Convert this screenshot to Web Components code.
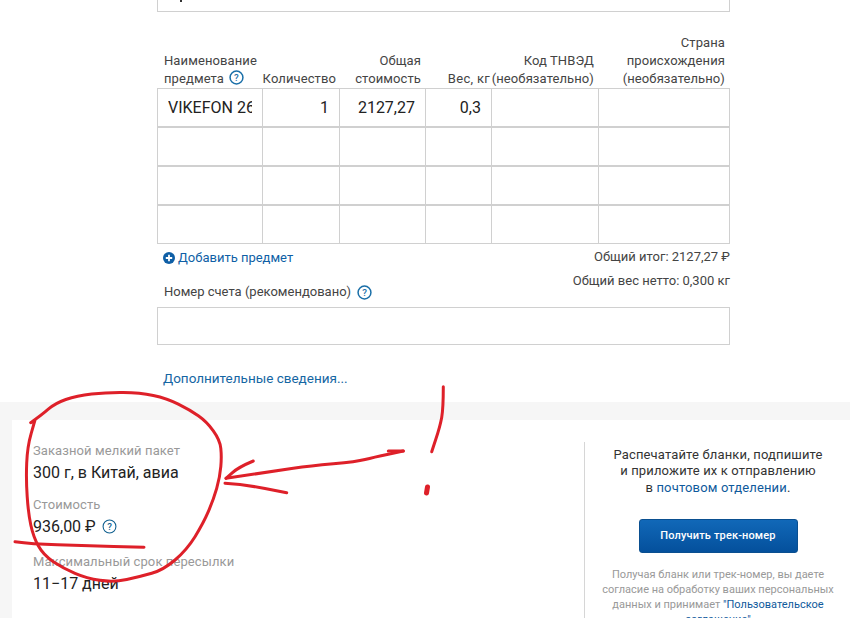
<!DOCTYPE html>
<html lang="ru"><head><meta charset="utf-8"><title>Бланки</title>
<style>
html,body{margin:0;padding:0;background:#fff}
body{width:850px;height:618px;overflow:hidden;position:relative;font-family:Roboto,"Liberation Sans",sans-serif;color:#333}
</style></head><body>
<customs-form></customs-form>
<result-panel></result-panel>
<red-marks></red-marks>
<script>
const helpSvg=(s,c,w)=>`<svg width="${s}" height="${s}" viewBox="0 0 14 14" style="vertical-align:-2px"><circle cx="7" cy="7" r="6" fill="none" stroke="${c}" stroke-width="${w}"/><text x="7" y="10.2" text-anchor="middle" font-family="Roboto,sans-serif" font-size="9" font-weight="500" fill="${c}">?</text></svg>`;
class HelpIcon extends HTMLElement{constructor(){super();const s=+this.getAttribute('size')||14;this.attachShadow({mode:'open'}).innerHTML=`<style>:host{display:inline-block;line-height:0}</style>${helpSvg(s,this.getAttribute('color')||'#1a6fa8',this.getAttribute('w')||1.3)}`}}
customElements.define('help-icon',HelpIcon);

class CustomsForm extends HTMLElement{constructor(){super();
const cols=[['VIKEFON 26','1','2127,27','0,3','',''],['','','','','',''],['','','','','',''],['','','','','','']];
const rows=cols.map((r,i)=>r.map((t,j)=>`<div class="c c${j} ${i?'top2':''}"><span>${t}</span></div>`).join('')).join('');
this.attachShadow({mode:'open'}).innerHTML=`<style>
:host{display:block;box-sizing:border-box;width:573px;margin-left:157px;height:402px;font:13px/18px Roboto,"Liberation Sans",sans-serif;color:#444}
.stub{height:11px;border:solid #d0d0d0;border-width:0 1px 1px;box-sizing:content-box;position:relative;overflow:hidden}
.stub i{display:block;width:2px;height:2px;background:#333;margin-left:22px}
.grid{display:grid;grid-template-columns:105px 77px 86px 66px 107px 132px}
.head{margin-top:22px;height:54px;align-items:end}
.head div{padding:0 4px 0 0;text-align:right;white-space:nowrap;letter-spacing:.1px}
.head div:first-child{text-align:left;padding-left:7px}
.head .q{padding-right:3px}
.head .w{padding-right:1px;letter-spacing:.3px}
.head help-icon{margin-left:2px}
.body{border:1px solid #d0d0d0;grid-template-columns:104px 77px 86px 66px 107px 131px}
.c{height:37px;border-left:1px solid #d0d0d0;display:flex;align-items:center;justify-content:flex-end;padding:0 10px;font-size:16px;color:#222;overflow:hidden;box-sizing:border-box}
.c0{border-left:0;justify-content:flex-start;padding:0 10px}
.c0 span{white-space:nowrap;overflow:hidden;width:85px;display:block}
.top2{border-top:2px solid #d0d0d0;height:39px}
.below{display:flex;justify-content:space-between;margin-top:5px;height:33px}
.add{color:#0f5fa6;display:flex;align-items:center;gap:3px;height:16px;margin:1px 0 0 6px;font-size:13px}
.tot{text-align:right;font-size:13px;line-height:16px;color:#444}
.tot div+div{margin-top:8px}
.lab{margin:0 0 0 7px;line-height:18px;height:20px;display:flex;gap:6px;align-items:center}
.inp{height:36px;border:1px solid #d0d0d0;margin-top:5px}
.more{display:block;margin:24px 0 0 6px;color:#1566a3;font-size:13.5px}
</style>
<div class="stub"><i></i></div>
<div class="grid head">
<div>Наименование<br>предмета <help-icon size="15" w="1.4"></help-icon></div><div class="q">Количество</div><div>Общая<br>стоимость</div><div class="w">Вес, кг</div><div>Код ТНВЭД<br>(необязательно)</div><div style="padding-right:5px">Страна<br>происхождения<br>(необязательно)</div>
</div>
<div class="grid body">${rows}</div>
<div class="below">
<div class="add"><svg width="12" height="12" viewBox="0 0 12 12"><circle cx="6" cy="6" r="6" fill="#0f5fa6"/><path d="M6 2.8v6.4M2.8 6h6.4" stroke="#fff" stroke-width="1.8"/></svg>Добавить предмет</div>
<div class="tot"><div>Общий итог: 2127,27 ₽</div><div>Общий вес нетто: 0,300 кг</div></div>
</div>
<div class="lab">Номер счета (рекомендовано) <help-icon size="15" w="1.4"></help-icon></div>
<div class="inp"></div>
<a class="more">Дополнительные сведения...</a>`}}
customElements.define('customs-form',CustomsForm);

class ResultPanel extends HTMLElement{constructor(){super();this.attachShadow({mode:'open'}).innerHTML=`<style>
:host{display:block;background:#f6f6f6;padding:18px 0 0 12px;height:216px;box-sizing:border-box;overflow:hidden}
.w{background:#fff;height:300px;display:flex;padding:20px 0 0 21px;box-sizing:border-box}
.l{width:551px;flex:none;font:16px/20px Roboto,"Liberation Sans",sans-serif;color:#222;padding-top:2px}
.k{font-size:13px;line-height:18px;color:#999;letter-spacing:.1px}
.v{margin-top:3px;height:33px}
.v.b{height:36px}
.v help-icon{margin-left:2px}
.r{width:267px;flex:none;border-left:1px solid #d6d6d6;margin-top:2px;text-align:center;font:13px/16.4px Roboto,"Liberation Sans",sans-serif;color:#333;padding-top:5px;box-sizing:border-box;letter-spacing:.15px}
.r a{color:#0f5a9c}
.btn{display:block;width:159px;height:34px;margin:23px auto 0;box-sizing:border-box;border:1px solid #0a4f90;border-radius:3px;background:linear-gradient(#1168b8,#04509c);color:#fff;font:500 11px/32px Roboto,"Liberation Sans",sans-serif}
.s{margin-top:14px;font-size:11px;line-height:15px;color:#999;letter-spacing:0}
</style>
<div class="w"><div class="l">
<div class="k">Заказной мелкий пакет</div><div class="v">300 г, в Китай, авиа</div>
<div class="k">Стоимость</div><div class="v b">936,00 ₽ <help-icon size="15" w="1" color="#0f5f8f"></help-icon></div>
<div class="k">Максимальный срок пересылки</div><div class="v">11−17 дней</div>
</div><div class="r">Распечатайте бланки, подпишите<br>и приложите их к отправлению<br>в <a>почтовом отделении</a>.
<div class="btn">Получить трек-номер</div>
<div class="s">Получая бланк или трек-номер, вы даете<br>согласие на обработку ваших персональных<br>данных и принимает <a>"Пользовательское<br>соглашение"</a></div>
</div></div>`}}
customElements.define('result-panel',ResultPanel);

class RedMarks extends HTMLElement{constructor(){super();
const z5=p=>p.map(([x,y])=>[x/3,y/3+380]),z7=p=>p.map(([x,y])=>[x/3+210,y/3+380]);
const f=n=>n.toFixed(1);
const d=p=>{let s=`M${f(p[0][0])} ${f(p[0][1])}`;for(let i=1;i<p.length-1;i++){const mx=(p[i][0]+p[i+1][0])/2,my=(p[i][1]+p[i+1][1])/2;s+=`Q${f(p[i][0])} ${f(p[i][1])} ${f(mx)} ${f(my)}`}const l=p[p.length-1];return s+`L${f(l[0])} ${f(l[1])}`};
const paths=[
z5([[92,128],[125,105],[165,70],[230,47],[320,37],[420,38],[500,55],[570,90],[620,125],[660,180],[665,230],[660,290],[640,360],[610,430],[560,510],[490,570],[420,590],[340,607],[260,595],[190,565],[130,525],[100,470],[85,400],[78,300],[82,200],[105,120]]),
z5([[45,485],[95,492],[250,497],[432,502]]),
z7([[48,295],[200,272],[300,258],[440,245],[490,232],[580,213]]),
z7([[535,213],[580,213]]),
z7([[130,243],[85,262],[48,295]]),
z7([[45,310],[100,313],[230,338]]),
z7([[700,20],[700,85],[690,140],[665,215]])];
this.attachShadow({mode:'open'}).innerHTML=`<style>:host{position:absolute;left:0;top:0;width:850px;height:618px;pointer-events:none}svg{display:block}</style>
<svg width="850" height="618" fill="none" stroke="#de2029" stroke-width="3" stroke-linecap="round" stroke-linejoin="round">${paths.map(p=>`<path d="${d(p)}"/>`).join('')}<path d="M427.5 487L426.5 493" stroke-width="5"/></svg>`}}
customElements.define('red-marks',RedMarks);
</script>
</body></html>
